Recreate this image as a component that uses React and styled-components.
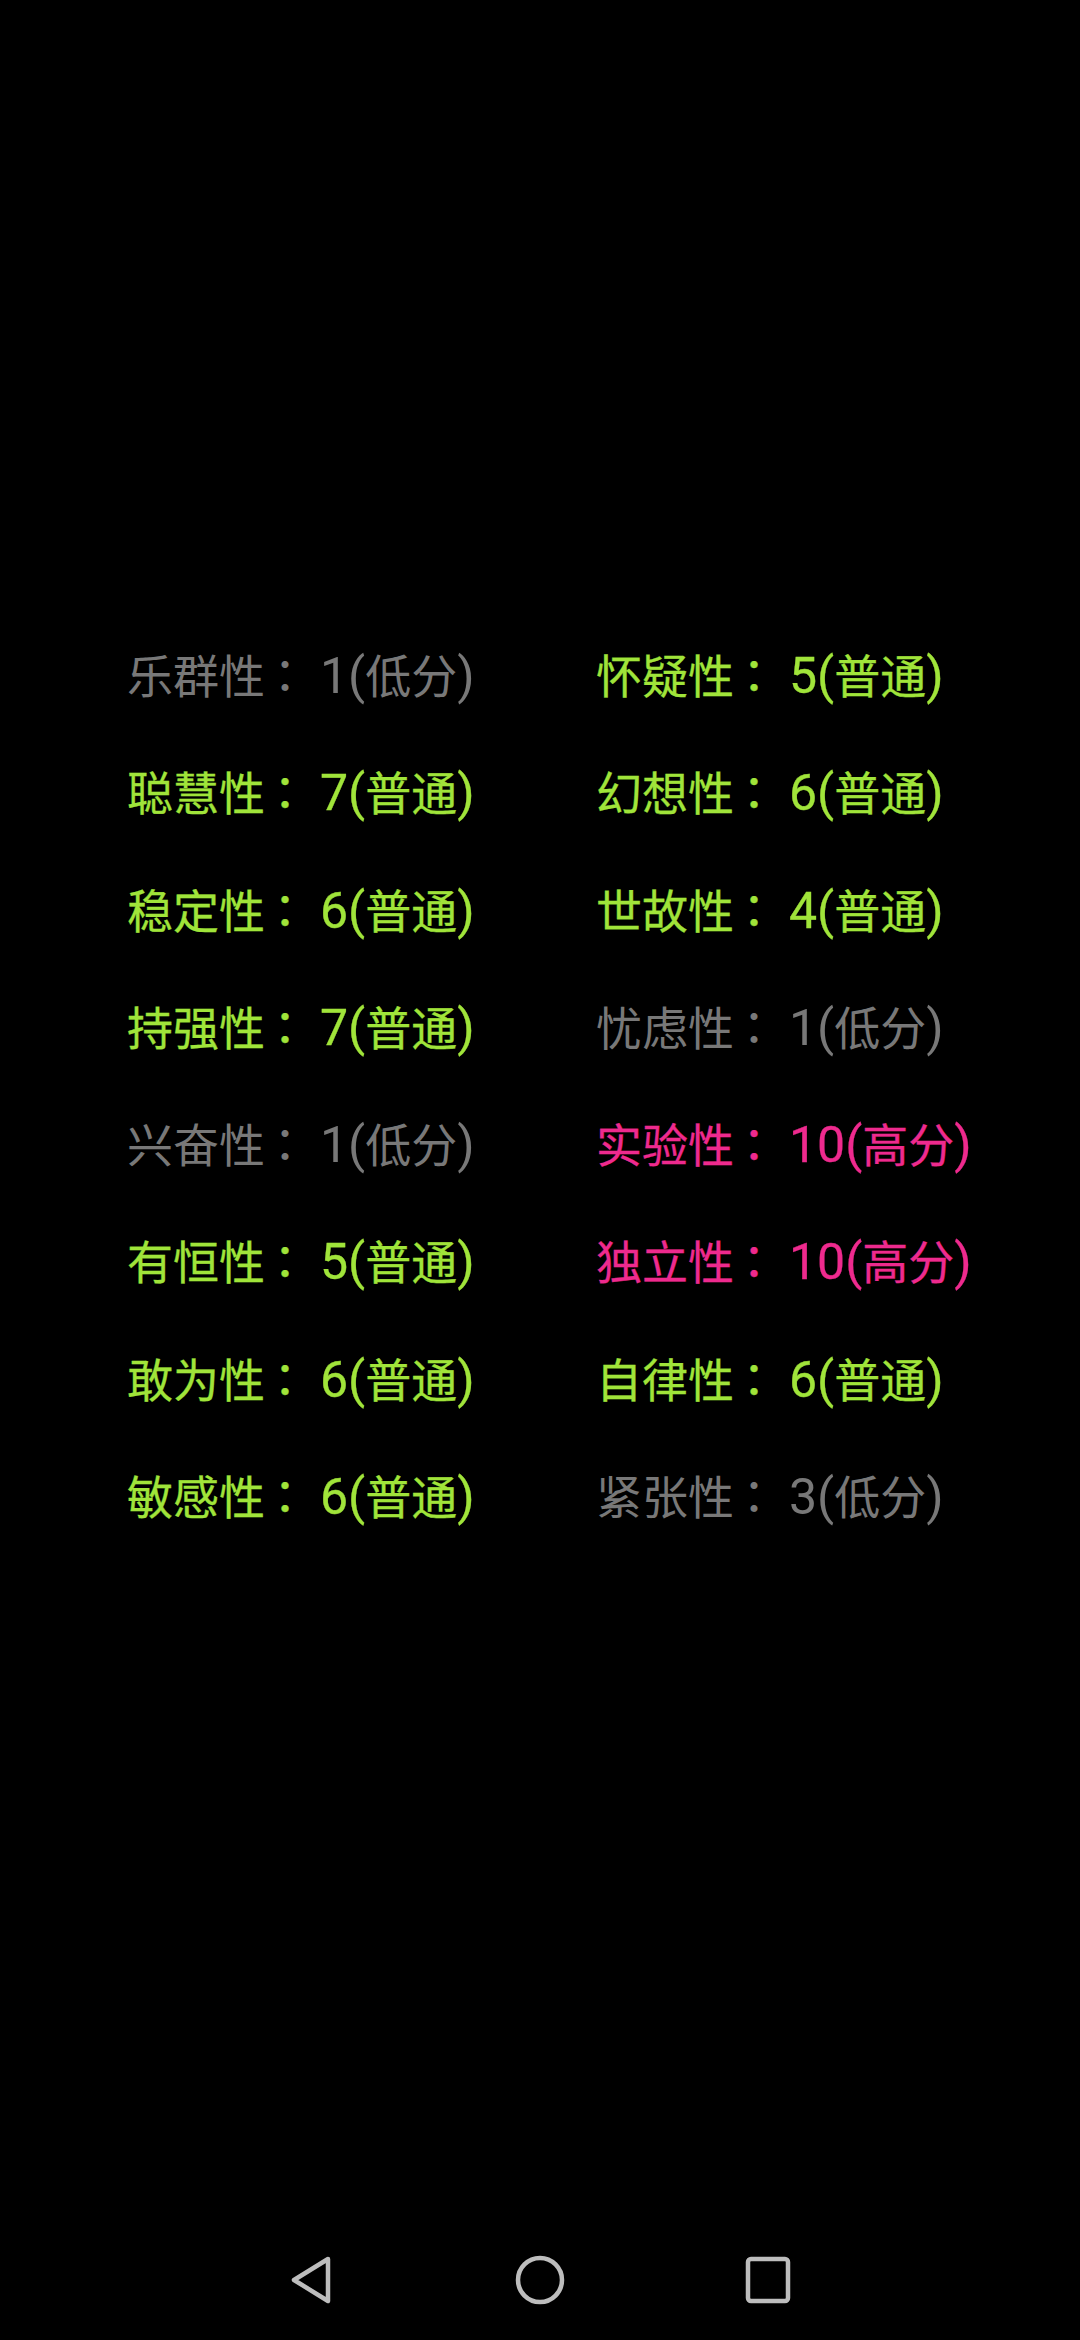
import React from 'react';
import styled, { createGlobalStyle } from 'styled-components';

const Global = createGlobalStyle`
  html, body {
    margin: 0;
    padding: 0;
    background: #000;
  }
`;

const Screen = styled.div`
  display: flex;
  flex-direction: column;
  width: 1080px;
  height: 2340px;
  background: #000;
  font-family: Roboto, "Noto Sans CJK SC", sans-serif;
`;

const Content = styled.main`
  flex: 1;
  padding: 615px 0 0 127px;
`;

const Grid = styled.div`
  display: grid;
  grid-template-columns: 469px auto;
  grid-auto-rows: 117.3px;
`;

const tones = {
  low: '#787878',
  normal: '#a0e43a',
  high: '#ee2a8e',
};

const Item = styled.div`
  font-size: 50px;
  line-height: 117px;
  white-space: nowrap;
  color: ${(p) => tones[p.$tone]};
  -webkit-text-stroke: ${(p) => (p.$tone === 'low' ? '0' : '0.3px')};
`;

const Cjk = styled.span`
  font-family: "Noto Sans CJK SC", sans-serif;
  font-size: 46px;
`;

const Colon = styled.span`
  display: inline-block;
  width: 48px;
  margin: 0 10px 0 -3px;
  font-family: "Noto Sans CJK TC", sans-serif;
  font-size: 46px;
`;

const NavBar = styled.nav`
  display: flex;
  justify-content: center;
  align-items: center;
  gap: 176px;
  height: 120px;
`;

const NavButton = styled.div`
  display: flex;
  align-items: center;
  justify-content: center;
  width: 52px;
  height: 52px;
`;

const traits = [
  ['乐群性', 1, 'low'],
  ['怀疑性', 5, 'normal'],
  ['聪慧性', 7, 'normal'],
  ['幻想性', 6, 'normal'],
  ['稳定性', 6, 'normal'],
  ['世故性', 4, 'normal'],
  ['持强性', 7, 'normal'],
  ['忧虑性', 1, 'low'],
  ['兴奋性', 1, 'low'],
  ['实验性', 10, 'high'],
  ['有恒性', 5, 'normal'],
  ['独立性', 10, 'high'],
  ['敢为性', 6, 'normal'],
  ['自律性', 6, 'normal'],
  ['敏感性', 6, 'normal'],
  ['紧张性', 3, 'low'],
];

const labels = { low: '低分', normal: '普通', high: '高分' };

export default function App() {
  return (
    <Screen>
      <Global />
      <Content>
        <Grid>
          {traits.map(([name, score, tone]) => (
            <Item key={name} $tone={tone}>
              <Cjk>{name}</Cjk>
              <Colon>：</Colon>
              {score}(<Cjk>{labels[tone]}</Cjk>)
            </Item>
          ))}
        </Grid>
      </Content>
      <NavBar>
        <NavButton>
          <svg width="44" height="52" viewBox="0 0 44 52">
            <path d="M38 5 L4 26 L38 47 Z" fill="none" stroke="#bdbdbd" strokeWidth="4.5" strokeLinejoin="round" />
          </svg>
        </NavButton>
        <NavButton>
          <svg width="52" height="52" viewBox="0 0 52 52">
            <circle cx="26" cy="26" r="22" fill="none" stroke="#bdbdbd" strokeWidth="4.5" />
          </svg>
        </NavButton>
        <NavButton>
          <svg width="48" height="52" viewBox="0 0 48 52">
            <rect x="4" y="5" width="40" height="42" rx="3" fill="none" stroke="#bdbdbd" strokeWidth="4.5" />
          </svg>
        </NavButton>
      </NavBar>
    </Screen>
  );
}
